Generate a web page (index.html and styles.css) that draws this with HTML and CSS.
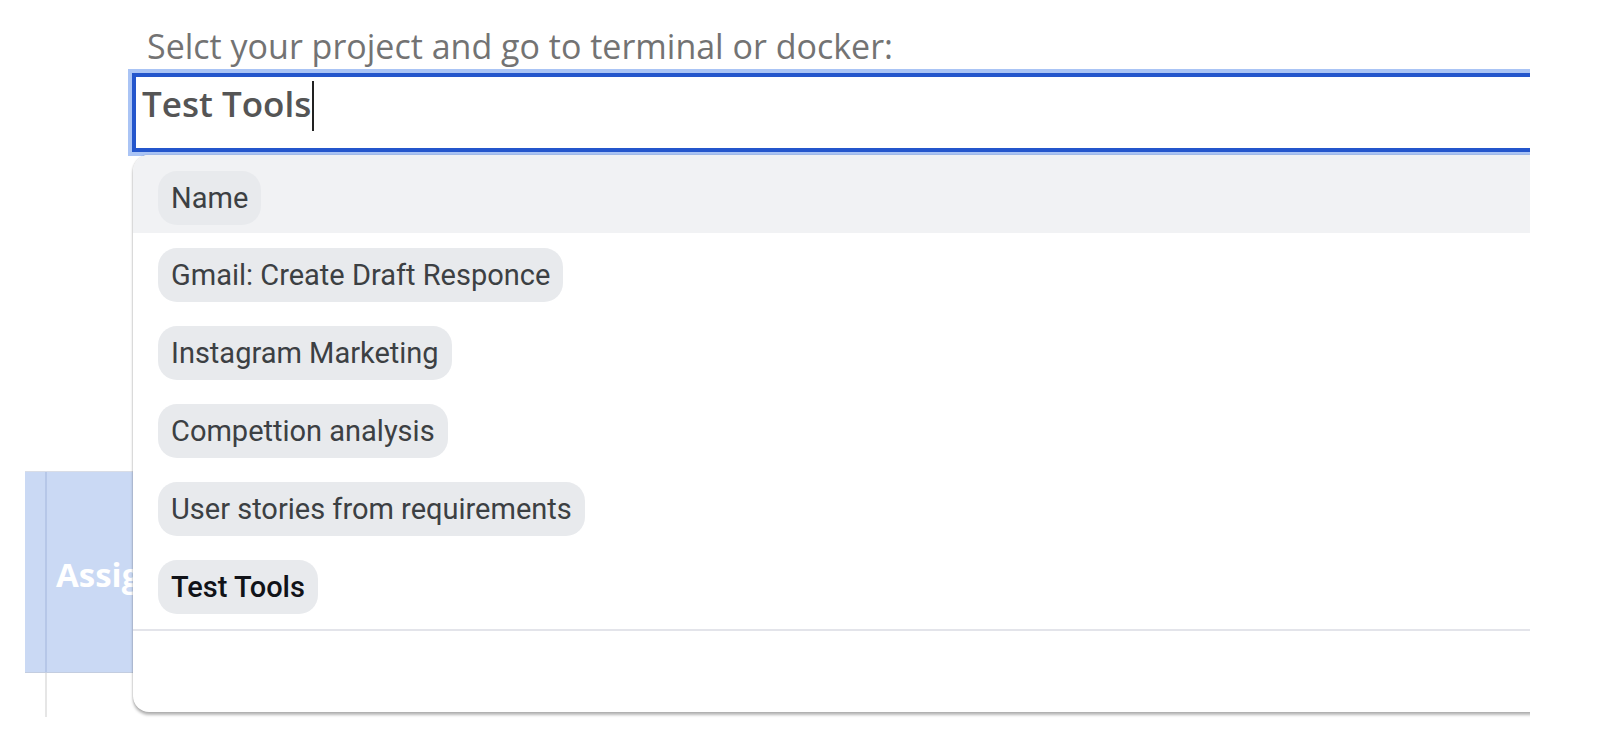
FILE: index.html
```html
<!DOCTYPE html>
<html lang="en">
<head>
<meta charset="utf-8">
<title>Select project</title>
<link rel="stylesheet" href="styles.css">
</head>
<body>
<div class="page">
  <div class="field">
    <div class="label">Selct your project and go to terminal or docker:</div>
    <div class="combo">
      <div class="input">Test Tools<span class="caret"></span></div>
      <div class="menu">
        <div class="menu-head"><span class="pill">Name</span></div>
        <ul class="options">
          <li class="option"><span class="pill">Gmail: Create Draft Responce</span></li>
          <li class="option"><span class="pill">Instagram Marketing</span></li>
          <li class="option"><span class="pill">Compettion analysis</span></li>
          <li class="option"><span class="pill">User stories from requirements</span></li>
          <li class="option selected"><span class="pill">Test Tools</span></li>
        </ul>
        <div class="menu-foot"></div>
      </div>
    </div>
  </div>
  <div class="table">
    <div class="row head">
      <div class="cell first"></div>
      <div class="cell main"><span class="head-text">Assigned</span></div>
    </div>
    <div class="row body">
      <div class="cell first"></div>
      <div class="cell main"></div>
    </div>
  </div>
</div>
</body>
</html>
```

FILE: styles.css
```css
html, body {
  margin: 0;
  padding: 0;
  background: #ffffff;
}

.page {
  width: 1530px;
  height: 734px;
  overflow: hidden;
  position: relative;
}

.field {
  padding-left: 132px;
  padding-top: 26px;
}

.label {
  margin-left: 15px;
  font-family: "Open Sans", "Lato", sans-serif;
  font-size: 34px;
  line-height: 40px;
  color: #737373;
  white-space: nowrap;
  margin-bottom: 7px;
}

.combo {
  position: relative;
}

.input {
  box-sizing: border-box;
  width: 1500px;
  height: 79px;
  border: 4px solid #2456cc;
  box-shadow: 0 0 0 4px #aac4f5;
  padding: 2px 0 0 6px;
  font-family: "Open Sans", "Lato", sans-serif;
  font-weight: 600;
  font-size: 35px;
  line-height: 50px;
  color: #555555;
  white-space: nowrap;
  background: #fff;
}

.caret {
  display: inline-block;
  width: 2px;
  height: 50px;
  background: #222;
  vertical-align: -14px;
  margin-left: 1px;
}

.menu {
  position: absolute;
  top: 82px;
  left: 1px;
  width: 1460px;
  background: #ffffff;
  border-radius: 16px;
  box-shadow: 0 3px 3px rgba(0, 0, 0, 0.28), 0 0 2px rgba(0, 0, 0, 0.2);
  overflow: hidden;
  z-index: 5;
  font-family: "Roboto", "Liberation Sans", sans-serif;
  font-size: 29px;
}

.menu-head {
  background: #f1f2f4;
  padding: 16px 0 8px 25px;
  display: flex;
}

.options {
  list-style: none;
  margin: 0;
  padding: 3px 0 3px 0;
}

.option {
  display: flex;
  padding: 12px 0 12px 25px;
}

.pill {
  display: inline-block;
  height: 54px;
  line-height: 55px;
  padding: 0 13px;
  border-radius: 19px;
  background: #e8eaed;
  color: #3c4043;
  white-space: nowrap;
}

.selected .pill {
  color: #111318;
  font-weight: 500;
}

.menu-foot {
  border-top: 2px solid #e3e4ea;
  height: 81px;
}

.table {
  margin-top: 319px;
  margin-left: 25px;
  width: 108px;
  overflow: hidden;
}

.row {
  display: flex;
}

.row.head {
  height: 202px;
  background: #cad9f4;
  border-top: 1px solid #d9dde6;
  border-bottom: 1px solid #c3cde0;
  box-sizing: border-box;
}

.row.body {
  height: 44px;
}

.cell.first {
  width: 20px;
  flex: none;
  border-right: 2px solid #b6c7e8;
}

.row.body .cell.first {
  border-right-color: #e6e6e6;
}

.cell.main {
  flex: 1;
  min-width: 0;
  overflow: hidden;
  padding-left: 9px;
  font-family: "Open Sans", "Lato", sans-serif;
  font-weight: 700;
  font-size: 33px;
  color: #ffffff;
  display: flex;
  align-items: center;
  padding-top: 4px;
  white-space: nowrap;
}
```
